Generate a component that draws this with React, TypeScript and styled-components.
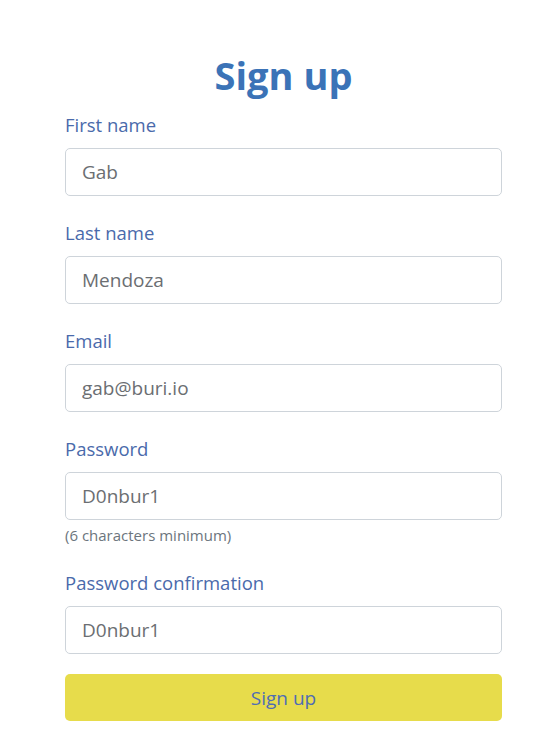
import React from 'react'
import styled, {createGlobalStyle} from 'styled-components'

const GlobalStyle = createGlobalStyle`
  body {
    margin: 0;
    background: #fff;
    font-family: 'Open Sans', 'Noto Sans', sans-serif;
  }
`

const Page = styled.div`
  padding: 45px 51px 24px 65px;
`

const Title = styled.h1`
  margin: 0 0 7px;
  text-align: center;
  font-size: 38px;
  font-weight: 700;
  line-height: 60px;
  color: #3b73b7;
`

const Form = styled.form`
  display: flex;
  flex-direction: column;
`

const Group = styled.div`
  margin-bottom: 24px;
`

const Label = styled.label`
  display: block;
  font-size: 18.5px;
  line-height: 26px;
  margin-bottom: 10px;
  color: #4a6aab;
`

const Input = styled.input`
  display: block;
  box-sizing: border-box;
  width: 100%;
  height: 48px;
  padding: 8px 16px;
  font-family: inherit;
  font-size: 19px;
  color: #6b6e72;
  background: #fff;
  border: 1px solid #ced4da;
  border-radius: 5px;
  outline: none;
`

const Hint = styled.small`
  display: block;
  margin-top: 4px;
  font-size: 15px;
  line-height: 22px;
  color: #6c757d;
`

const Submit = styled.button`
  height: 47px;
  margin-top: -4px;
  border: none;
  border-radius: 5px;
  background: #e7dc4b;
  color: #4f6db4;
  font-family: inherit;
  font-size: 19px;
  cursor: pointer;
`

type FieldProps = {label: string; value: string; hint?: string}

const Field: React.FC<FieldProps> = ({label, value, hint}) => (
  <Group>
    <Label>{label}</Label>
    <Input type="text" defaultValue={value} />
    {hint && <Hint>{hint}</Hint>}
  </Group>
)

const App: React.FC = () => {
  return (
    <>
      <GlobalStyle />
      <Page>
        <Title>Sign up</Title>
        <Form onSubmit={(e) => e.preventDefault()}>
          <Field label="First name" value="Gab" />
          <Field label="Last name" value="Mendoza" />
          <Field label="Email" value="gab@buri.io" />
          <Field label="Password" value="D0nbur1" hint="(6 characters minimum)" />
          <Field label="Password confirmation" value="D0nbur1" />
          <Submit type="submit">Sign up</Submit>
        </Form>
      </Page>
    </>
  )
}

export default App
